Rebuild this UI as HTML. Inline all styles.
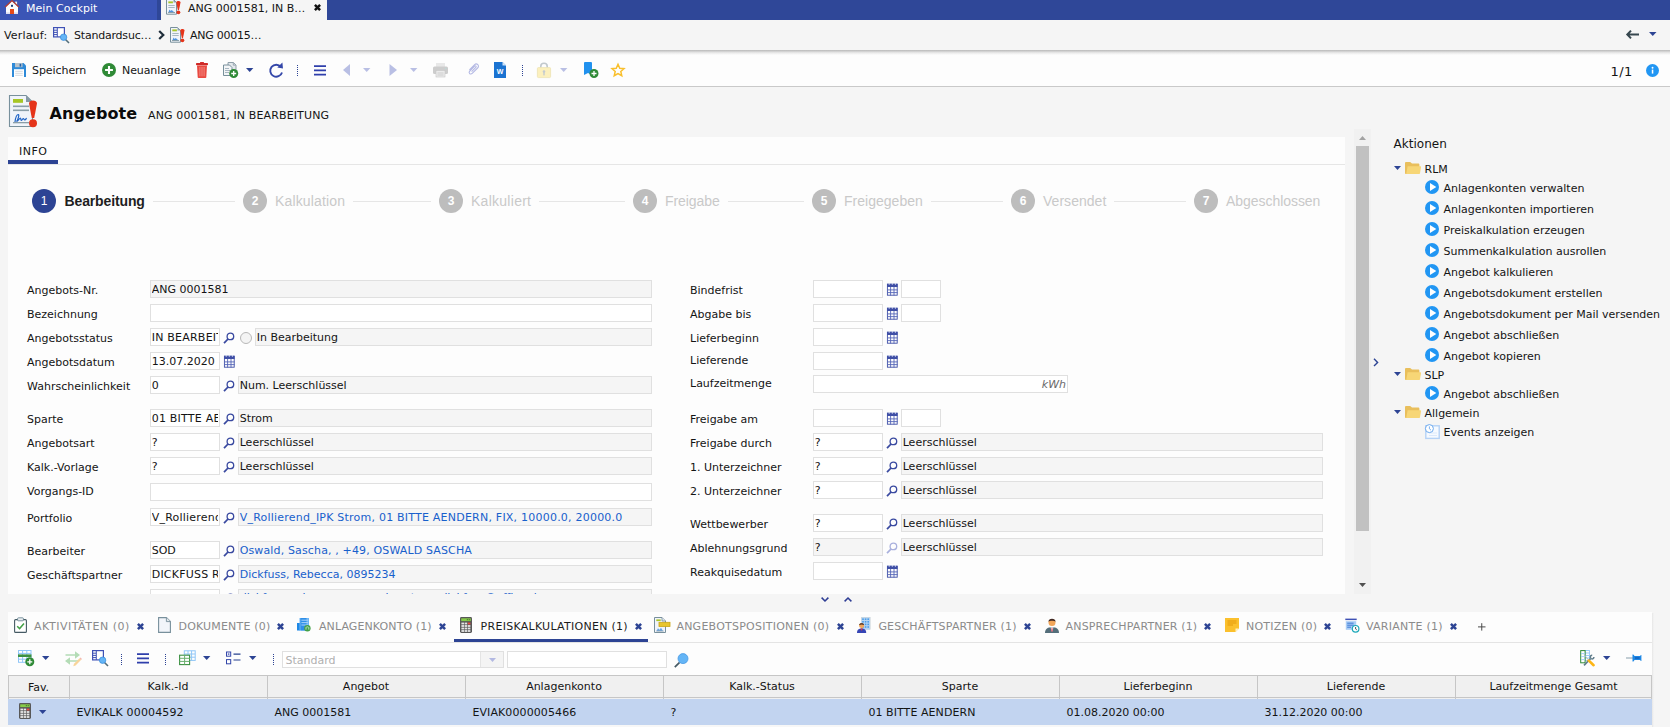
<!DOCTYPE html>
<html lang="de"><head><meta charset="utf-8"><title>Angebote – ANG 0001581</title>
<style>
html,body{margin:0;padding:0}
body{width:1670px;height:727px;overflow:hidden;background:#f5f5f5;position:relative;font-family:"DejaVu Sans","Liberation Sans",sans-serif;font-size:11px}
.a{position:absolute}
.t{white-space:nowrap;display:block}
svg{position:absolute;overflow:visible}
</style></head>
<body>
<div class="a" style="left:0px;top:0px;width:1670px;height:20px;background:#2f4798;"></div>
<div class="a" style="left:0px;top:0px;width:157px;height:20px;background:#3b55b6;"></div>
<div class="a" style="left:161px;top:0px;width:166px;height:20px;background:#f5f5f5;"></div>
<svg style="left:5px;top:0px" width="14" height="14" viewBox="0 0 14 14"><rect x="10.2" y="1.6" width="1.9" height="3.4" fill="#f1f1f6"></rect><path d="M1 6.6L7 0.9L13 6.6V14H1Z" fill="#fbfbfd"></path><rect x="1" y="12.3" width="12" height="1.7" fill="#dedef0"></rect><rect x="5" y="9" width="4" height="5" fill="#e64a19"></rect><rect x="6" y="4.8" width="2" height="2" fill="#1f3f7a"></rect><path d="M0.2 7L7 0.6L13.8 7" fill="none" stroke="#b23b32" stroke-width="1.3"></path></svg>
<span class="a t" style="font-size: 11px; line-height: 14px; color: rgb(255, 255, 255); left: 26px; letter-spacing: 0.03px; top: 2px;">Mein Cockpit</span>
<svg style="left:166px;top:-0.8px" width="15" height="16" viewBox="0 0 15 16"><path d="M0.5 0.5H7.5L10.5 3.5V15.2H0.5Z" fill="#f1f4fa" stroke="#78909c"></path><path d="M7.5 0.5V3.5H10.5Z" fill="#90a4ae"></path><rect x="2.3" y="2.4" width="4.6" height="1.9" fill="#a8c628"></rect><rect x="2.3" y="6" width="6.4" height="0.9" fill="#9fb0b9"></rect><rect x="2.3" y="8" width="6.4" height="0.9" fill="#9fb0b9"></rect><path d="M2.4 13.2L3.6 10.4L4.6 12L5.8 11L7 12.2L8.4 13.2Z" fill="#4f93de"></path><rect x="2" y="13" width="7" height="0.9" fill="#8097a2"></rect><path d="M10.3 3.6C10.3 1.6 14.5 1.6 14.5 3.6L13 11H11.8Z" fill="#e5341a"></path><circle cx="12.4" cy="13.3" r="1.9" fill="#e5341a"></circle></svg>
<span class="a t" style="font-size: 11px; line-height: 14px; color: rgb(20, 20, 20); left: 188px; top: 2px;">ANG 0001581, IN B…</span>
<svg style="left:314px;top:4px" width="7" height="7" viewBox="0 0 7 7"><path d="M0.9 0.9L6.1 6.1M6.1 0.9L0.9 6.1" stroke="#111" stroke-width="2.5" stroke-linecap="butt"></path></svg>
<div class="a" style="left:0px;top:20px;width:1670px;height:30px;background:#f5f5f5;"></div>
<span class="a t" style="font-size: 11px; line-height: 14px; color: rgb(20, 20, 20); left: 4px; letter-spacing: 0.17px; top: 29px;">Verlauf:</span>
<svg style="left:53px;top:27px" width="17" height="17" viewBox="0 0 17 17"><rect x="0.6" y="0.6" width="10.8" height="9.3" fill="#fff" stroke="#3f51b5" stroke-width="1.2"></rect><path d="M1 3.2H4M1 5.4H4M1 7.6H4" stroke="#3f51b5" stroke-width="1"></path><path d="M4.3 0.6V9.9" stroke="#3f51b5" stroke-width="1"></path><path d="M12.5 12.5L16 16" stroke="#546e7a" stroke-width="1.6"></path><circle cx="10.6" cy="10.2" r="3.2" fill="#64b5f6" stroke="#3d8fdc" stroke-width="0.8"></circle></svg>
<span class="a t" style="font-size: 11px; line-height: 14px; color: rgb(20, 20, 20); left: 74px; letter-spacing: -0.21px; top: 29px;">Standardsuc…</span>
<svg style="left:158px;top:30px" width="7" height="10" viewBox="0 0 7 10"><path d="M1.2 1L5.3 5L1.2 9" fill="none" stroke="#1f2d3a" stroke-width="2.2"></path></svg>
<svg style="left:170px;top:27px" width="15" height="16" viewBox="0 0 15 16"><path d="M0.5 0.5H7.5L10.5 3.5V15.2H0.5Z" fill="#f1f4fa" stroke="#78909c"></path><path d="M7.5 0.5V3.5H10.5Z" fill="#90a4ae"></path><rect x="2.3" y="2.4" width="4.6" height="1.9" fill="#a8c628"></rect><rect x="2.3" y="6" width="6.4" height="0.9" fill="#9fb0b9"></rect><rect x="2.3" y="8" width="6.4" height="0.9" fill="#9fb0b9"></rect><path d="M2.4 13.2L3.6 10.4L4.6 12L5.8 11L7 12.2L8.4 13.2Z" fill="#4f93de"></path><rect x="2" y="13" width="7" height="0.9" fill="#8097a2"></rect><path d="M10.3 3.6C10.3 1.6 14.5 1.6 14.5 3.6L13 11H11.8Z" fill="#e5341a"></path><circle cx="12.4" cy="13.3" r="1.9" fill="#e5341a"></circle></svg>
<span class="a t" style="font-size: 11px; line-height: 14px; color: rgb(20, 20, 20); left: 190px; letter-spacing: -0.25px; top: 29px;">ANG 00015…</span>
<svg style="left:1626px;top:30px" width="13" height="9" viewBox="0 0 13 9"><path d="M5 0.6L1.3 4.5L5 8.4M1.6 4.5H13" fill="none" stroke="#37474f" stroke-width="2"></path></svg>
<svg style="left:1648.5px;top:32px" width="7.5" height="4" viewBox="0 0 7.5 4"><path d="M0 0H7.5L3.75 4Z" fill="#2d4494"></path></svg>
<div class="a" style="left:0;top:50px;width:1670px;height:5px;background:linear-gradient(#b9b9b9,#e9e9e9 55%,#fdfdfd)"></div>
<div class="a" style="left:0px;top:55px;width:1670px;height:31px;background:#fdfdfd;"></div>
<div class="a" style="left:0px;top:86px;width:1670px;height:1px;background:#c9c9c9;"></div>
<svg style="left:12px;top:63px" width="14" height="14" viewBox="0 0 14 14"><path d="M0 0H11.5L14 2.5V14H0Z" fill="#2e8ad8"></path><rect x="3" y="0" width="7.5" height="4.2" fill="#b6c2cb"></rect><rect x="7.6" y="0.8" width="1.6" height="2.8" fill="#1f5fa8"></rect><rect x="2" y="6.2" width="10" height="7.8" fill="#fff"></rect><path d="M3.2 8.3H10.8M3.2 10.3H10.8M3.2 12.3H10.8" stroke="#cfd5da" stroke-width="0.9"></path></svg>
<span class="a t" style="font-size: 11px; line-height: 14px; color: rgb(20, 20, 20); left: 32px; letter-spacing: -0.07px; top: 64px;">Speichern</span>
<svg style="left:102px;top:63px" width="14" height="14" viewBox="0 0 14 14"><circle cx="7.0" cy="7.0" r="7.0" fill="#2f8a36"></circle><path d="M7.0 3.08V10.92M3.08 7.0H10.92" stroke="#fff" stroke-width="2.1"></path></svg>
<span class="a t" style="font-size: 11px; line-height: 14px; color: rgb(20, 20, 20); left: 122px; letter-spacing: -0.1px; top: 64px;">Neuanlage</span>
<svg style="left:196px;top:62px" width="12" height="16" viewBox="0 0 12 16"><rect x="4" y="0" width="4" height="1.6" rx="0.6" fill="#d32f2f"></rect><rect x="0" y="1" width="12" height="2.2" rx="0.8" fill="#cf2a27"></rect><path d="M1 3.6H11L10.3 15.2C10.3 15.7 9.9 16 9.5 16H2.5C2.1 16 1.7 15.7 1.7 15.2Z" fill="#e94a41"></path><path d="M3.9 5V14.3M6 5V14.3M8.1 5V14.3" stroke="#f39088" stroke-width="0.9"></path></svg>
<svg style="left:223px;top:62px" width="16" height="16" viewBox="0 0 16 16"><path d="M5 0.5H10.5L13 3V10.5H5Z" fill="#e3e8ec" stroke="#90a0aa"></path><path d="M10.3 0.7V3.2H12.8" fill="#cfd8dc" stroke="#90a0aa" stroke-width="0.8"></path><path d="M0.5 3H6.5L9 5.5V13.5H0.5Z" fill="#f3f5f7" stroke="#78909c"></path><path d="M2 6.5H6M2 8.5H7M2 10.5H6" stroke="#9fb0ba" stroke-width="0.9"></path><circle cx="10.7" cy="11.5" r="4.5" fill="#2f8a36"></circle><path d="M10.7 9V14M8.2 11.5H13.2" stroke="#fff" stroke-width="1.3"></path></svg>
<svg style="left:246px;top:68px" width="7.4" height="4" viewBox="0 0 7.4 4"><path d="M0 0H7.4L3.7 4Z" fill="#2d4494"></path></svg>
<svg style="left:269px;top:62px" width="15" height="16" viewBox="0 0 15 16"><path d="M11.9 4.9A6 6 0 1 0 13 10.4" fill="none" stroke="#3447a9" stroke-width="1.9"></path><path d="M8.3 5.6L14 6.6L13.4 0.4Z" fill="#3447a9"></path></svg>
<svg style="left:297px;top:65px" width="1" height="11" viewBox="0 0 1 11"><path d="M0.5 0V11" stroke="#2d4494" stroke-width="1" stroke-dasharray="1 1"></path></svg>
<svg style="left:314px;top:65px" width="12" height="11" viewBox="0 0 12 11"><path d="M0 1.1H12M0 5.4H12M0 9.6H12" stroke="#2f3fab" stroke-width="1.9"></path></svg>
<svg style="left:343px;top:64px" width="7" height="12" viewBox="0 0 7 12"><path d="M7 0V12L0 6Z" fill="#b9bfe4"></path></svg>
<svg style="left:363px;top:68px" width="7.4" height="4" viewBox="0 0 7.4 4"><path d="M0 0H7.4L3.7 4Z" fill="#b9bfe4"></path></svg>
<svg style="left:389px;top:64px" width="8" height="12" viewBox="0 0 8 12"><path d="M0.5 0V12L8 6Z" fill="#b9bfe4"></path></svg>
<svg style="left:410px;top:68px" width="7.4" height="4" viewBox="0 0 7.4 4"><path d="M0 0H7.4L3.7 4Z" fill="#b9bfe4"></path></svg>
<svg style="left:433px;top:63px" width="15" height="14" viewBox="0 0 15 14"><rect x="3" y="0" width="9" height="4" fill="#e8e8e8"></rect><rect x="0" y="3.5" width="15" height="7.5" rx="1.5" fill="#cdcdcd"></rect><rect x="3" y="7.5" width="9" height="6.5" fill="#ebebeb" stroke="#c6c6c6" stroke-width="0.6"></rect><path d="M4.5 10H10.5M4.5 12H10.5" stroke="#c9c9c9" stroke-width="0.9"></path><circle cx="12.8" cy="5.3" r="0.6" fill="#b2dfdb"></circle></svg>
<svg style="left:467px;top:63px" width="13" height="13" viewBox="0 0 13 13"><path d="M4.6 8.6L8.8 4.4C9.8 3.4 8.6 2.2 7.6 3.2L2.8 8C1 9.8 3.4 12.2 5.2 10.4L10.6 5C13 2.6 9.8 -0.6 7.4 1.8L2.4 6.8" fill="none" stroke="#b4b9e4" stroke-width="1.1"></path></svg>
<svg style="left:494px;top:62px" width="12" height="16" viewBox="0 0 12 16"><path d="M0 0H8.5L12 3.5V16H0Z" fill="#1b73d1"></path><path d="M8.5 0V3.5H12Z" fill="#d4e6f9"></path><text x="6" y="12.2" font-family="Liberation Sans,sans-serif" font-size="7" font-weight="bold" fill="#fff" text-anchor="middle">W</text></svg>
<svg style="left:522px;top:65px" width="1" height="11" viewBox="0 0 1 11"><path d="M0.5 0V11" stroke="#2d4494" stroke-width="1" stroke-dasharray="1 1"></path></svg>
<svg style="left:537px;top:62px" width="14" height="16" viewBox="0 0 14 16"><path d="M3.8 6.5V4.2C3.8 0.3 10.2 0.3 10.2 4.2V6.5" fill="none" stroke="#c2c9cd" stroke-width="1.6"></path><rect x="0.4" y="5.6" width="13.2" height="10" rx="1" fill="#fcf0bd" stroke="#ece2b4" stroke-width="0.8"></rect><circle cx="7" cy="9.5" r="1.3" fill="#c5cbcf"></circle><rect x="6.3" y="9.8" width="1.4" height="3.6" fill="#c5cbcf"></rect></svg>
<svg style="left:560px;top:68px" width="7.4" height="4" viewBox="0 0 7.4 4"><path d="M0 0H7.4L3.7 4Z" fill="#b9bfe4"></path></svg>
<svg style="left:584px;top:62px" width="15" height="16" viewBox="0 0 15 16"><path d="M0 1.2C0 0.5 0.5 0 1.2 0H6.8C7.5 0 8 0.5 8 1.2V13L4 11L0 13Z" fill="#2191ee"></path><circle cx="10" cy="11.5" r="4.5" fill="#2f8a36"></circle><path d="M10 9V14M7.5 11.5H12.5" stroke="#fff" stroke-width="1.3"></path></svg>
<svg style="left:611px;top:63px" width="14" height="14" viewBox="0 0 14 14"><path d="M7 1.3L8.75 5.3L13 5.7L9.8 8.5L10.75 12.7L7 10.5L3.25 12.7L4.2 8.5L1 5.7L5.25 5.3Z" fill="none" stroke="#f9bf2c" stroke-width="1.5" stroke-linejoin="miter"></path></svg>
<span class="a t" style="font-size: 13px; line-height: 16px; color: rgb(20, 20, 20); left: 1610.5px; letter-spacing: 0.46px; top: 64px;">1/1</span>
<svg style="left:1645.5px;top:63.5px" width="13" height="13" viewBox="0 0 13 13"><circle cx="6.5" cy="6.5" r="6.5" fill="#2196f3"></circle><rect x="5.8" y="5.6" width="1.5" height="4" fill="#fff"></rect><circle cx="6.55" cy="3.7" r="0.95" fill="#fff"></circle></svg>
<svg style="left:9px;top:95px" width="30" height="33" viewBox="0 0 30 33"><path d="M0.5 0.5H17L23.5 7V31.5H0.5Z" fill="#f0f4fa" stroke="#78909c" stroke-width="1.1"></path><path d="M17 0.5V7H23.5Z" fill="#8699a3"></path><rect x="4" y="4" width="10" height="3.8" fill="#a6c625"></rect><rect x="4" y="10.5" width="16" height="1.6" fill="#8a9ea8"></rect><rect x="4" y="14.5" width="16" height="1.6" fill="#8a9ea8"></rect><rect x="4" y="27" width="16" height="1.3" fill="#8a9ea8"></rect><path d="M6 27C6.5 23 8 19.5 9.3 19.5C10.6 19.5 9 25 7.5 26.5C9 26 10.5 23 11.5 23C12 23 11.5 25.5 12.3 25.5C13 25.5 13.6 23.5 14.3 23.5C15 23.5 15 25 15.7 25C16.3 25 17 23.5 17.8 23.3" fill="none" stroke="#1e63c6" stroke-width="1.2"></path><path d="M20 8.5C20 4.6 28 4.6 28 8.5L25.2 23H22.8Z" fill="#e5341a"></path><circle cx="24" cy="28.2" r="4" fill="#e5341a"></circle></svg>
<span class="a t" style="font-size: 16px; line-height: 19px; color: rgb(11, 11, 11); font-weight: bold; left: 49.5px; letter-spacing: 0.1px; top: 104px;">Angebote</span>
<span class="a t" style="font-size: 11px; line-height: 14px; color: rgb(20, 20, 20); left: 148px; letter-spacing: 0.13px; top: 109px;">ANG 0001581, IN BEARBEITUNG</span>
<div class="a" style="left:8px;top:137px;width:1337px;height:457px;background:#fdfdfd;"></div>
<span class="a t" style="font-size: 11px; line-height: 14px; color: rgb(20, 20, 20); left: 19px; letter-spacing: 0.46px; top: 145px;">INFO</span>
<div class="a" style="left:8px;top:164px;width:1337px;height:1px;background:#e6e6e6;"></div>
<div class="a" style="left:8px;top:160px;width:50px;height:4px;background:#2d4494;"></div>
<div class="a" style="left:32px;top:189px;width:24px;height:24px;border-radius:12px;background:#2d4494"></div>
<span class="a t" style="font-size: 12px; line-height: 15px; color: rgb(255, 255, 255); font-family: &quot;Liberation Sans&quot;, &quot;DejaVu Sans&quot;, sans-serif; left: 40.7px; top: 194.3px;">1</span>
<span class="a t" style="font-size: 14px; line-height: 17px; color: rgb(31, 31, 31); font-weight: bold; font-family: &quot;Liberation Sans&quot;, &quot;DejaVu Sans&quot;, sans-serif; left: 64.5px; letter-spacing: -0.13px; top: 193px;">Bearbeitung</span>
<div class="a" style="left:153px;top:201px;width:82px;height:1px;background:#e6e6e6;"></div>
<div class="a" style="left:243px;top:189px;width:24px;height:24px;border-radius:12px;background:#bdbdbd"></div>
<span class="a t" style="font-size: 12px; line-height: 15px; color: rgb(255, 255, 255); font-weight: bold; font-family: &quot;Liberation Sans&quot;, &quot;DejaVu Sans&quot;, sans-serif; left: 251.7px; top: 194.3px;">2</span>
<span class="a t" style="font-size: 14px; line-height: 17px; color: rgb(201, 201, 201); font-family: &quot;Liberation Sans&quot;, &quot;DejaVu Sans&quot;, sans-serif; left: 275px; letter-spacing: 0.16px; top: 193px;">Kalkulation</span>
<div class="a" style="left:353px;top:201px;width:78px;height:1px;background:#e6e6e6;"></div>
<div class="a" style="left:439px;top:189px;width:24px;height:24px;border-radius:12px;background:#bdbdbd"></div>
<span class="a t" style="font-size: 12px; line-height: 15px; color: rgb(255, 255, 255); font-weight: bold; font-family: &quot;Liberation Sans&quot;, &quot;DejaVu Sans&quot;, sans-serif; left: 447.7px; top: 194.3px;">3</span>
<span class="a t" style="font-size: 14px; line-height: 17px; color: rgb(201, 201, 201); font-family: &quot;Liberation Sans&quot;, &quot;DejaVu Sans&quot;, sans-serif; left: 471px; letter-spacing: 0.27px; top: 193px;">Kalkuliert</span>
<div class="a" style="left:539px;top:201px;width:86px;height:1px;background:#e6e6e6;"></div>
<div class="a" style="left:633px;top:189px;width:24px;height:24px;border-radius:12px;background:#bdbdbd"></div>
<span class="a t" style="font-size: 12px; line-height: 15px; color: rgb(255, 255, 255); font-weight: bold; font-family: &quot;Liberation Sans&quot;, &quot;DejaVu Sans&quot;, sans-serif; left: 641.7px; top: 194.3px;">4</span>
<span class="a t" style="font-size: 14px; line-height: 17px; color: rgb(201, 201, 201); font-family: &quot;Liberation Sans&quot;, &quot;DejaVu Sans&quot;, sans-serif; left: 665px; letter-spacing: -0.06px; top: 193px;">Freigabe</span>
<div class="a" style="left:727.5px;top:201px;width:76.5px;height:1px;background:#e6e6e6;"></div>
<div class="a" style="left:812px;top:189px;width:24px;height:24px;border-radius:12px;background:#bdbdbd"></div>
<span class="a t" style="font-size: 12px; line-height: 15px; color: rgb(255, 255, 255); font-weight: bold; font-family: &quot;Liberation Sans&quot;, &quot;DejaVu Sans&quot;, sans-serif; left: 820.7px; top: 194.3px;">5</span>
<span class="a t" style="font-size: 14px; line-height: 17px; color: rgb(201, 201, 201); font-family: &quot;Liberation Sans&quot;, &quot;DejaVu Sans&quot;, sans-serif; left: 844px; letter-spacing: 0.02px; top: 193px;">Freigegeben</span>
<div class="a" style="left:930.5px;top:201px;width:72.5px;height:1px;background:#e6e6e6;"></div>
<div class="a" style="left:1011px;top:189px;width:24px;height:24px;border-radius:12px;background:#bdbdbd"></div>
<span class="a t" style="font-size: 12px; line-height: 15px; color: rgb(255, 255, 255); font-weight: bold; font-family: &quot;Liberation Sans&quot;, &quot;DejaVu Sans&quot;, sans-serif; left: 1019.7px; top: 194.3px;">6</span>
<span class="a t" style="font-size: 14px; line-height: 17px; color: rgb(201, 201, 201); font-family: &quot;Liberation Sans&quot;, &quot;DejaVu Sans&quot;, sans-serif; left: 1043px; letter-spacing: 0.03px; top: 193px;">Versendet</span>
<div class="a" style="left:1114px;top:201px;width:72px;height:1px;background:#e6e6e6;"></div>
<div class="a" style="left:1194px;top:189px;width:24px;height:24px;border-radius:12px;background:#bdbdbd"></div>
<span class="a t" style="font-size: 12px; line-height: 15px; color: rgb(255, 255, 255); font-weight: bold; font-family: &quot;Liberation Sans&quot;, &quot;DejaVu Sans&quot;, sans-serif; left: 1202.7px; top: 194.3px;">7</span>
<span class="a t" style="font-size: 14px; line-height: 17px; color: rgb(201, 201, 201); font-family: &quot;Liberation Sans&quot;, &quot;DejaVu Sans&quot;, sans-serif; left: 1226px; letter-spacing: -0.05px; top: 193px;">Abgeschlossen</span>
<span class="a t" style="font-size: 11px; line-height: 14px; color: rgb(20, 20, 20); left: 27px; top: 284px;">Angebots-Nr.</span>
<div class="a" style="left:150px;top:280px;width:502px;height:18px;background:#f5f5f5;border:1px solid #e0e0e0;box-sizing:border-box;"></div>
<span class="a t" style="font-size: 11px; line-height: 14px; color: rgb(20, 20, 20); width: 498px; overflow: hidden; left: 151.7px; top: 283px;">ANG 0001581</span>
<span class="a t" style="font-size: 11px; line-height: 14px; color: rgb(20, 20, 20); left: 27px; top: 308px;">Bezeichnung</span>
<div class="a" style="left:150px;top:304px;width:502px;height:18px;background:#fff;border:1px solid #e0e0e0;box-sizing:border-box;"></div>
<span class="a t" style="font-size: 11px; line-height: 14px; color: rgb(20, 20, 20); left: 27px; top: 332px;">Angebotsstatus</span>
<div class="a" style="left:150px;top:328px;width:70px;height:18px;background:#fff;border:1px solid #e0e0e0;box-sizing:border-box;"></div>
<span class="a t" style="font-size: 11px; line-height: 14px; color: rgb(20, 20, 20); letter-spacing: 0.22px; width: 66px; overflow: hidden; left: 151.7px; top: 331px;">IN BEARBEITUNG</span>
<svg style="left:223px;top:332px" width="12" height="12" viewBox="0 0 12 12"><circle cx="7.4" cy="4.4" r="3.3" fill="none" stroke="#3949a0" stroke-width="1.3"></circle><path d="M5 7L1 11.2" stroke="#3949a0" stroke-width="1.8"></path></svg>
<div class="a" style="left:240px;top:332px;width:12px;height:12px;border-radius:6px;border:1px solid #b8b8b8;box-sizing:border-box;background:#f4f4f4"></div>
<div class="a" style="left:255px;top:328px;width:397px;height:18px;background:#f5f5f5;border:1px solid #e0e0e0;box-sizing:border-box;"></div>
<span class="a t" style="font-size: 11px; line-height: 14px; color: rgb(20, 20, 20); width: 393px; overflow: hidden; left: 256.7px; top: 331px;">In Bearbeitung</span>
<span class="a t" style="font-size: 11px; line-height: 14px; color: rgb(20, 20, 20); left: 27px; top: 356px;">Angebotsdatum</span>
<div class="a" style="left:150px;top:352px;width:70px;height:18px;background:#fff;border:1px solid #e0e0e0;box-sizing:border-box;"></div>
<span class="a t" style="font-size: 11px; line-height: 14px; color: rgb(20, 20, 20); width: 66px; overflow: hidden; left: 151.7px; top: 355px;">13.07.2020</span>
<svg style="left:224px;top:354.6px" width="11" height="13" viewBox="0 0 11 13"><rect x="0" y="0.8" width="10.6" height="3.2" fill="#3f4fa6"></rect><rect x="0.4" y="1.2" width="9.8" height="11" fill="none" stroke="#3f4fa6" stroke-width="0.9"></rect><path d="M3.6 4V12.5M7 4V12.5M0 6.9H10.6M0 9.6H10.6" stroke="#5565b8" stroke-width="0.9"></path><path d="M2.2 0V1.8M5.3 0V1.8M8.4 0V1.8" stroke="#dfe3f5" stroke-width="0.9"></path></svg>
<span class="a t" style="font-size: 11px; line-height: 14px; color: rgb(20, 20, 20); left: 27px; top: 380px;">Wahrscheinlichkeit</span>
<div class="a" style="left:150px;top:376px;width:70px;height:18px;background:#fff;border:1px solid #e0e0e0;box-sizing:border-box;"></div>
<span class="a t" style="font-size: 11px; line-height: 14px; color: rgb(20, 20, 20); width: 66px; overflow: hidden; left: 151.7px; top: 379px;">0</span>
<svg style="left:223px;top:380px" width="12" height="12" viewBox="0 0 12 12"><circle cx="7.4" cy="4.4" r="3.3" fill="none" stroke="#3949a0" stroke-width="1.3"></circle><path d="M5 7L1 11.2" stroke="#3949a0" stroke-width="1.8"></path></svg>
<div class="a" style="left:238px;top:376px;width:414px;height:18px;background:#f5f5f5;border:1px solid #e0e0e0;box-sizing:border-box;"></div>
<span class="a t" style="font-size: 11px; line-height: 14px; color: rgb(20, 20, 20); width: 410px; overflow: hidden; left: 239.7px; top: 379px;">Num. Leerschlüssel</span>
<span class="a t" style="font-size: 11px; line-height: 14px; color: rgb(20, 20, 20); left: 27px; top: 413px;">Sparte</span>
<div class="a" style="left:150px;top:409px;width:70px;height:18px;background:#fff;border:1px solid #e0e0e0;box-sizing:border-box;"></div>
<span class="a t" style="font-size: 11px; line-height: 14px; color: rgb(20, 20, 20); letter-spacing: 0.22px; width: 66px; overflow: hidden; left: 151.7px; top: 412px;">01 BITTE AENDERN</span>
<svg style="left:223px;top:413px" width="12" height="12" viewBox="0 0 12 12"><circle cx="7.4" cy="4.4" r="3.3" fill="none" stroke="#3949a0" stroke-width="1.3"></circle><path d="M5 7L1 11.2" stroke="#3949a0" stroke-width="1.8"></path></svg>
<div class="a" style="left:238px;top:409px;width:414px;height:18px;background:#f5f5f5;border:1px solid #e0e0e0;box-sizing:border-box;"></div>
<span class="a t" style="font-size: 11px; line-height: 14px; color: rgb(20, 20, 20); width: 410px; overflow: hidden; left: 239.7px; top: 412px;">Strom</span>
<span class="a t" style="font-size: 11px; line-height: 14px; color: rgb(20, 20, 20); left: 27px; top: 437px;">Angebotsart</span>
<div class="a" style="left:150px;top:433px;width:70px;height:18px;background:#fff;border:1px solid #e0e0e0;box-sizing:border-box;"></div>
<span class="a t" style="font-size: 11px; line-height: 14px; color: rgb(20, 20, 20); width: 66px; overflow: hidden; left: 151.7px; top: 436px;">?</span>
<svg style="left:223px;top:437px" width="12" height="12" viewBox="0 0 12 12"><circle cx="7.4" cy="4.4" r="3.3" fill="none" stroke="#3949a0" stroke-width="1.3"></circle><path d="M5 7L1 11.2" stroke="#3949a0" stroke-width="1.8"></path></svg>
<div class="a" style="left:238px;top:433px;width:414px;height:18px;background:#f5f5f5;border:1px solid #e0e0e0;box-sizing:border-box;"></div>
<span class="a t" style="font-size: 11px; line-height: 14px; color: rgb(20, 20, 20); width: 410px; overflow: hidden; left: 239.7px; top: 436px;">Leerschlüssel</span>
<span class="a t" style="font-size: 11px; line-height: 14px; color: rgb(20, 20, 20); left: 27px; top: 461px;">Kalk.-Vorlage</span>
<div class="a" style="left:150px;top:457px;width:70px;height:18px;background:#fff;border:1px solid #e0e0e0;box-sizing:border-box;"></div>
<span class="a t" style="font-size: 11px; line-height: 14px; color: rgb(20, 20, 20); width: 66px; overflow: hidden; left: 151.7px; top: 460px;">?</span>
<svg style="left:223px;top:461px" width="12" height="12" viewBox="0 0 12 12"><circle cx="7.4" cy="4.4" r="3.3" fill="none" stroke="#3949a0" stroke-width="1.3"></circle><path d="M5 7L1 11.2" stroke="#3949a0" stroke-width="1.8"></path></svg>
<div class="a" style="left:238px;top:457px;width:414px;height:18px;background:#f5f5f5;border:1px solid #e0e0e0;box-sizing:border-box;"></div>
<span class="a t" style="font-size: 11px; line-height: 14px; color: rgb(20, 20, 20); width: 410px; overflow: hidden; left: 239.7px; top: 460px;">Leerschlüssel</span>
<span class="a t" style="font-size: 11px; line-height: 14px; color: rgb(20, 20, 20); left: 27px; top: 485px;">Vorgangs-ID</span>
<div class="a" style="left:150px;top:483px;width:502px;height:18px;background:#fff;border:1px solid #e0e0e0;box-sizing:border-box;"></div>
<span class="a t" style="font-size: 11px; line-height: 14px; color: rgb(20, 20, 20); left: 27px; top: 512px;">Portfolio</span>
<div class="a" style="left:150px;top:508px;width:70px;height:18px;background:#fff;border:1px solid #e0e0e0;box-sizing:border-box;"></div>
<span class="a t" style="font-size: 11px; line-height: 14px; color: rgb(20, 20, 20); letter-spacing: 0.22px; width: 66px; overflow: hidden; left: 151.7px; top: 511px;">V_Rollierend_IPK Strom</span>
<svg style="left:223px;top:512px" width="12" height="12" viewBox="0 0 12 12"><circle cx="7.4" cy="4.4" r="3.3" fill="none" stroke="#3949a0" stroke-width="1.3"></circle><path d="M5 7L1 11.2" stroke="#3949a0" stroke-width="1.8"></path></svg>
<div class="a" style="left:238px;top:508px;width:414px;height:18px;background:#f5f5f5;border:1px solid #e0e0e0;box-sizing:border-box;"></div>
<span class="a t" style="font-size: 11px; line-height: 14px; color: rgb(24, 96, 204); left: 239.7px; letter-spacing: 0.22px; top: 511px;">V_Rollierend_IPK Strom, 01 BITTE AENDERN, FIX, 10000.0, 20000.0</span>
<span class="a t" style="font-size: 11px; line-height: 14px; color: rgb(20, 20, 20); left: 27px; top: 545px;">Bearbeiter</span>
<div class="a" style="left:150px;top:541px;width:70px;height:18px;background:#fff;border:1px solid #e0e0e0;box-sizing:border-box;"></div>
<span class="a t" style="font-size: 11px; line-height: 14px; color: rgb(20, 20, 20); width: 66px; overflow: hidden; left: 151.7px; top: 544px;">SOD</span>
<svg style="left:223px;top:545px" width="12" height="12" viewBox="0 0 12 12"><circle cx="7.4" cy="4.4" r="3.3" fill="none" stroke="#3949a0" stroke-width="1.3"></circle><path d="M5 7L1 11.2" stroke="#3949a0" stroke-width="1.8"></path></svg>
<div class="a" style="left:238px;top:541px;width:414px;height:18px;background:#f5f5f5;border:1px solid #e0e0e0;box-sizing:border-box;"></div>
<span class="a t" style="font-size: 11px; line-height: 14px; color: rgb(24, 96, 204); left: 239.7px; letter-spacing: 0.14px; top: 544px;">Oswald, Sascha, , +49, OSWALD SASCHA</span>
<span class="a t" style="font-size: 11px; line-height: 14px; color: rgb(20, 20, 20); left: 27px; top: 569px;">Geschäftspartner</span>
<div class="a" style="left:150px;top:565px;width:70px;height:18px;background:#fff;border:1px solid #e0e0e0;box-sizing:border-box;"></div>
<span class="a t" style="font-size: 11px; line-height: 14px; color: rgb(20, 20, 20); letter-spacing: 0.22px; width: 66px; overflow: hidden; left: 151.7px; top: 568px;">DICKFUSS REBECCA</span>
<svg style="left:223px;top:569px" width="12" height="12" viewBox="0 0 12 12"><circle cx="7.4" cy="4.4" r="3.3" fill="none" stroke="#3949a0" stroke-width="1.3"></circle><path d="M5 7L1 11.2" stroke="#3949a0" stroke-width="1.8"></path></svg>
<div class="a" style="left:238px;top:565px;width:414px;height:18px;background:#f5f5f5;border:1px solid #e0e0e0;box-sizing:border-box;"></div>
<span class="a t" style="font-size: 11px; line-height: 14px; color: rgb(24, 96, 204); width: 410px; overflow: hidden; left: 239.7px; top: 568px;">Dickfuss, Rebecca, 0895234</span>
<span class="a t" style="font-size: 11px; line-height: 14px; color: rgb(20, 20, 20); left: 27px; top: 593px;">Ansprechpartner</span>
<div class="a" style="left:150px;top:589px;width:70px;height:18px;background:#fff;border:1px solid #e0e0e0;box-sizing:border-box;"></div>
<svg style="left:223px;top:593px" width="12" height="12" viewBox="0 0 12 12"><circle cx="7.4" cy="4.4" r="3.3" fill="none" stroke="#3949a0" stroke-width="1.3"></circle><path d="M5 7L1 11.2" stroke="#3949a0" stroke-width="1.8"></path></svg>
<div class="a" style="left:238px;top:589px;width:414px;height:18px;background:#f5f5f5;border:1px solid #e0e0e0;box-sizing:border-box;"></div>
<span class="a t" style="font-size: 11px; line-height: 14px; color: rgb(24, 96, 204); left: 239.7px; top: 591.1px;">dickfuss, rebecca, ansprechpartner, dickfuss@office.de</span>
<span class="a t" style="font-size: 11px; line-height: 14px; color: rgb(20, 20, 20); left: 690px; top: 284px;">Bindefrist</span>
<div class="a" style="left:813px;top:280px;width:70px;height:18px;background:#fff;border:1px solid #e0e0e0;box-sizing:border-box;"></div>
<svg style="left:887px;top:282.6px" width="11" height="13" viewBox="0 0 11 13"><rect x="0" y="0.8" width="10.6" height="3.2" fill="#3f4fa6"></rect><rect x="0.4" y="1.2" width="9.8" height="11" fill="none" stroke="#3f4fa6" stroke-width="0.9"></rect><path d="M3.6 4V12.5M7 4V12.5M0 6.9H10.6M0 9.6H10.6" stroke="#5565b8" stroke-width="0.9"></path><path d="M2.2 0V1.8M5.3 0V1.8M8.4 0V1.8" stroke="#dfe3f5" stroke-width="0.9"></path></svg>
<div class="a" style="left:901px;top:280px;width:40px;height:18px;background:#fff;border:1px solid #e0e0e0;box-sizing:border-box;"></div>
<span class="a t" style="font-size: 11px; line-height: 14px; color: rgb(20, 20, 20); left: 690px; top: 308px;">Abgabe bis</span>
<div class="a" style="left:813px;top:304px;width:70px;height:18px;background:#fff;border:1px solid #e0e0e0;box-sizing:border-box;"></div>
<svg style="left:887px;top:306.6px" width="11" height="13" viewBox="0 0 11 13"><rect x="0" y="0.8" width="10.6" height="3.2" fill="#3f4fa6"></rect><rect x="0.4" y="1.2" width="9.8" height="11" fill="none" stroke="#3f4fa6" stroke-width="0.9"></rect><path d="M3.6 4V12.5M7 4V12.5M0 6.9H10.6M0 9.6H10.6" stroke="#5565b8" stroke-width="0.9"></path><path d="M2.2 0V1.8M5.3 0V1.8M8.4 0V1.8" stroke="#dfe3f5" stroke-width="0.9"></path></svg>
<div class="a" style="left:901px;top:304px;width:40px;height:18px;background:#fff;border:1px solid #e0e0e0;box-sizing:border-box;"></div>
<span class="a t" style="font-size: 11px; line-height: 14px; color: rgb(20, 20, 20); left: 690px; top: 332px;">Lieferbeginn</span>
<div class="a" style="left:813px;top:328px;width:70px;height:18px;background:#fff;border:1px solid #e0e0e0;box-sizing:border-box;"></div>
<svg style="left:887px;top:330.6px" width="11" height="13" viewBox="0 0 11 13"><rect x="0" y="0.8" width="10.6" height="3.2" fill="#3f4fa6"></rect><rect x="0.4" y="1.2" width="9.8" height="11" fill="none" stroke="#3f4fa6" stroke-width="0.9"></rect><path d="M3.6 4V12.5M7 4V12.5M0 6.9H10.6M0 9.6H10.6" stroke="#5565b8" stroke-width="0.9"></path><path d="M2.2 0V1.8M5.3 0V1.8M8.4 0V1.8" stroke="#dfe3f5" stroke-width="0.9"></path></svg>
<span class="a t" style="font-size: 11px; line-height: 14px; color: rgb(20, 20, 20); left: 690px; top: 354px;">Lieferende</span>
<div class="a" style="left:813px;top:352px;width:70px;height:18px;background:#fff;border:1px solid #e0e0e0;box-sizing:border-box;"></div>
<svg style="left:887px;top:354.6px" width="11" height="13" viewBox="0 0 11 13"><rect x="0" y="0.8" width="10.6" height="3.2" fill="#3f4fa6"></rect><rect x="0.4" y="1.2" width="9.8" height="11" fill="none" stroke="#3f4fa6" stroke-width="0.9"></rect><path d="M3.6 4V12.5M7 4V12.5M0 6.9H10.6M0 9.6H10.6" stroke="#5565b8" stroke-width="0.9"></path><path d="M2.2 0V1.8M5.3 0V1.8M8.4 0V1.8" stroke="#dfe3f5" stroke-width="0.9"></path></svg>
<span class="a t" style="font-size: 11px; line-height: 14px; color: rgb(20, 20, 20); left: 690px; top: 377px;">Laufzeitmenge</span>
<div class="a" style="left:813px;top:375px;width:255px;height:18px;background:#fff;border:1px solid #e0e0e0;box-sizing:border-box;"></div>
<span class="a t" style="font-size: 11px; line-height: 14px; color: rgb(105, 105, 105); font-style: italic; right: 604px; top: 378px;">kWh</span>
<span class="a t" style="font-size: 11px; line-height: 14px; color: rgb(20, 20, 20); left: 690px; top: 413px;">Freigabe am</span>
<div class="a" style="left:813px;top:409px;width:70px;height:18px;background:#fff;border:1px solid #e0e0e0;box-sizing:border-box;"></div>
<svg style="left:887px;top:411.6px" width="11" height="13" viewBox="0 0 11 13"><rect x="0" y="0.8" width="10.6" height="3.2" fill="#3f4fa6"></rect><rect x="0.4" y="1.2" width="9.8" height="11" fill="none" stroke="#3f4fa6" stroke-width="0.9"></rect><path d="M3.6 4V12.5M7 4V12.5M0 6.9H10.6M0 9.6H10.6" stroke="#5565b8" stroke-width="0.9"></path><path d="M2.2 0V1.8M5.3 0V1.8M8.4 0V1.8" stroke="#dfe3f5" stroke-width="0.9"></path></svg>
<div class="a" style="left:901px;top:409px;width:40px;height:18px;background:#fff;border:1px solid #e0e0e0;box-sizing:border-box;"></div>
<span class="a t" style="font-size: 11px; line-height: 14px; color: rgb(20, 20, 20); left: 690px; top: 437px;">Freigabe durch</span>
<div class="a" style="left:813px;top:433px;width:70px;height:18px;background:#fff;border:1px solid #e0e0e0;box-sizing:border-box;"></div>
<span class="a t" style="font-size: 11px; line-height: 14px; color: rgb(20, 20, 20); width: 66px; overflow: hidden; left: 814.7px; top: 436px;">?</span>
<svg style="left:886px;top:437px" width="12" height="12" viewBox="0 0 12 12"><circle cx="7.4" cy="4.4" r="3.3" fill="none" stroke="#3949a0" stroke-width="1.3"></circle><path d="M5 7L1 11.2" stroke="#3949a0" stroke-width="1.8"></path></svg>
<div class="a" style="left:901px;top:433px;width:422px;height:18px;background:#f5f5f5;border:1px solid #e0e0e0;box-sizing:border-box;"></div>
<span class="a t" style="font-size: 11px; line-height: 14px; color: rgb(20, 20, 20); width: 418px; overflow: hidden; left: 902.7px; top: 436px;">Leerschlüssel</span>
<span class="a t" style="font-size: 11px; line-height: 14px; color: rgb(20, 20, 20); left: 690px; top: 461px;">1. Unterzeichner</span>
<div class="a" style="left:813px;top:457px;width:70px;height:18px;background:#fff;border:1px solid #e0e0e0;box-sizing:border-box;"></div>
<span class="a t" style="font-size: 11px; line-height: 14px; color: rgb(20, 20, 20); width: 66px; overflow: hidden; left: 814.7px; top: 460px;">?</span>
<svg style="left:886px;top:461px" width="12" height="12" viewBox="0 0 12 12"><circle cx="7.4" cy="4.4" r="3.3" fill="none" stroke="#3949a0" stroke-width="1.3"></circle><path d="M5 7L1 11.2" stroke="#3949a0" stroke-width="1.8"></path></svg>
<div class="a" style="left:901px;top:457px;width:422px;height:18px;background:#f5f5f5;border:1px solid #e0e0e0;box-sizing:border-box;"></div>
<span class="a t" style="font-size: 11px; line-height: 14px; color: rgb(20, 20, 20); width: 418px; overflow: hidden; left: 902.7px; top: 460px;">Leerschlüssel</span>
<span class="a t" style="font-size: 11px; line-height: 14px; color: rgb(20, 20, 20); left: 690px; top: 485px;">2. Unterzeichner</span>
<div class="a" style="left:813px;top:481px;width:70px;height:18px;background:#fff;border:1px solid #e0e0e0;box-sizing:border-box;"></div>
<span class="a t" style="font-size: 11px; line-height: 14px; color: rgb(20, 20, 20); width: 66px; overflow: hidden; left: 814.7px; top: 484px;">?</span>
<svg style="left:886px;top:485px" width="12" height="12" viewBox="0 0 12 12"><circle cx="7.4" cy="4.4" r="3.3" fill="none" stroke="#3949a0" stroke-width="1.3"></circle><path d="M5 7L1 11.2" stroke="#3949a0" stroke-width="1.8"></path></svg>
<div class="a" style="left:901px;top:481px;width:422px;height:18px;background:#f5f5f5;border:1px solid #e0e0e0;box-sizing:border-box;"></div>
<span class="a t" style="font-size: 11px; line-height: 14px; color: rgb(20, 20, 20); width: 418px; overflow: hidden; left: 902.7px; top: 484px;">Leerschlüssel</span>
<span class="a t" style="font-size: 11px; line-height: 14px; color: rgb(20, 20, 20); left: 690px; top: 518px;">Wettbewerber</span>
<div class="a" style="left:813px;top:514px;width:70px;height:18px;background:#fff;border:1px solid #e0e0e0;box-sizing:border-box;"></div>
<span class="a t" style="font-size: 11px; line-height: 14px; color: rgb(20, 20, 20); width: 66px; overflow: hidden; left: 814.7px; top: 517px;">?</span>
<svg style="left:886px;top:518px" width="12" height="12" viewBox="0 0 12 12"><circle cx="7.4" cy="4.4" r="3.3" fill="none" stroke="#3949a0" stroke-width="1.3"></circle><path d="M5 7L1 11.2" stroke="#3949a0" stroke-width="1.8"></path></svg>
<div class="a" style="left:901px;top:514px;width:422px;height:18px;background:#f5f5f5;border:1px solid #e0e0e0;box-sizing:border-box;"></div>
<span class="a t" style="font-size: 11px; line-height: 14px; color: rgb(20, 20, 20); width: 418px; overflow: hidden; left: 902.7px; top: 517px;">Leerschlüssel</span>
<span class="a t" style="font-size: 11px; line-height: 14px; color: rgb(20, 20, 20); left: 690px; top: 542px;">Ablehnungsgrund</span>
<div class="a" style="left:813px;top:538px;width:70px;height:18px;background:#f5f5f5;border:1px solid #e0e0e0;box-sizing:border-box;"></div>
<span class="a t" style="font-size: 11px; line-height: 14px; color: rgb(20, 20, 20); width: 66px; overflow: hidden; left: 814.7px; top: 541px;">?</span>
<svg style="left:886px;top:542px" width="12" height="12" viewBox="0 0 12 12"><circle cx="7.4" cy="4.4" r="3.3" fill="none" stroke="#a9b0dd" stroke-width="1.3"></circle><path d="M5 7L1 11.2" stroke="#a9b0dd" stroke-width="1.8"></path></svg>
<div class="a" style="left:901px;top:538px;width:422px;height:18px;background:#f5f5f5;border:1px solid #e0e0e0;box-sizing:border-box;"></div>
<span class="a t" style="font-size: 11px; line-height: 14px; color: rgb(20, 20, 20); width: 418px; overflow: hidden; left: 902.7px; top: 541px;">Leerschlüssel</span>
<span class="a t" style="font-size: 11px; line-height: 14px; color: rgb(20, 20, 20); left: 690px; top: 566px;">Reakquisedatum</span>
<div class="a" style="left:813px;top:562px;width:70px;height:18px;background:#fff;border:1px solid #e0e0e0;box-sizing:border-box;"></div>
<svg style="left:887px;top:564.6px" width="11" height="13" viewBox="0 0 11 13"><rect x="0" y="0.8" width="10.6" height="3.2" fill="#3f4fa6"></rect><rect x="0.4" y="1.2" width="9.8" height="11" fill="none" stroke="#3f4fa6" stroke-width="0.9"></rect><path d="M3.6 4V12.5M7 4V12.5M0 6.9H10.6M0 9.6H10.6" stroke="#5565b8" stroke-width="0.9"></path><path d="M2.2 0V1.8M5.3 0V1.8M8.4 0V1.8" stroke="#dfe3f5" stroke-width="0.9"></path></svg>
<div class="a" style="left:0px;top:594px;width:1354px;height:18px;background:#f5f5f5;"></div>
<div class="a" style="left:1354px;top:129px;width:17px;height:465px;background:#f1f1f1;"></div>
<div class="a" style="left:1356px;top:146px;width:13px;height:385px;background:#c1c1c1;"></div>
<svg style="left:1359px;top:136px" width="7" height="4" viewBox="0 0 7 4"><path d="M0 4H7L3.5 0Z" fill="#a3a3a3"></path></svg>
<svg style="left:1359px;top:583px" width="7" height="4" viewBox="0 0 7 4"><path d="M0 0H7L3.5 4Z" fill="#505050"></path></svg>
<svg style="left:1373px;top:358px" width="6" height="9" viewBox="0 0 6 9"><path d="M1 0.8L4.6 4.4L1 8" fill="none" stroke="#2d4494" stroke-width="1.4"></path></svg>
<span class="a t" style="font-size: 12px; line-height: 15px; color: rgb(20, 20, 20); left: 1393.5px; letter-spacing: 0.02px; top: 137px;">Aktionen</span>
<svg style="left:1394px;top:166.0px" width="7" height="4" viewBox="0 0 7 4"><path d="M0 0H7L3.5 4Z" fill="#2d4494"></path></svg>
<svg style="left:1405px;top:162.0px" width="16" height="12" viewBox="0 0 16 12"><path d="M0 1.2C0 0.5 0.5 0 1.2 0H5.2L7 1.6H13.2C13.9 1.6 14.4 2.1 14.4 2.8V11C14.4 11.6 13.9 12 13.2 12H1.2C0.5 12 0 11.6 0 11Z" fill="#e9bf5c"></path><path d="M2.6 4.2H15.2C15.8 4.2 16.1 4.6 16 5.2L15 11.2C14.9 11.7 14.5 12 14 12H1.2Z" fill="#f7d676"></path></svg>
<span class="a t" style="font-size: 11px; line-height: 14px; color: rgb(20, 20, 20); left: 1424.5px; top: 163px;">RLM</span>
<svg style="left:1425px;top:180.0px" width="14" height="14" viewBox="0 0 14 14"><circle cx="7" cy="7" r="7" fill="#2196f3"></circle><path d="M5 3V11L11.3 7Z" fill="#fff"></path></svg>
<span class="a t" style="font-size: 11px; line-height: 14px; color: rgb(20, 20, 20); left: 1443.5px; top: 182px;">Anlagenkonten verwalten</span>
<svg style="left:1425px;top:201.0px" width="14" height="14" viewBox="0 0 14 14"><circle cx="7" cy="7" r="7" fill="#2196f3"></circle><path d="M5 3V11L11.3 7Z" fill="#fff"></path></svg>
<span class="a t" style="font-size: 11px; line-height: 14px; color: rgb(20, 20, 20); left: 1443.5px; top: 203px;">Anlagenkonten importieren</span>
<svg style="left:1425px;top:222.0px" width="14" height="14" viewBox="0 0 14 14"><circle cx="7" cy="7" r="7" fill="#2196f3"></circle><path d="M5 3V11L11.3 7Z" fill="#fff"></path></svg>
<span class="a t" style="font-size: 11px; line-height: 14px; color: rgb(20, 20, 20); left: 1443.5px; top: 224px;">Preiskalkulation erzeugen</span>
<svg style="left:1425px;top:243.0px" width="14" height="14" viewBox="0 0 14 14"><circle cx="7" cy="7" r="7" fill="#2196f3"></circle><path d="M5 3V11L11.3 7Z" fill="#fff"></path></svg>
<span class="a t" style="font-size: 11px; line-height: 14px; color: rgb(20, 20, 20); left: 1443.5px; top: 245px;">Summenkalkulation ausrollen</span>
<svg style="left:1425px;top:264.0px" width="14" height="14" viewBox="0 0 14 14"><circle cx="7" cy="7" r="7" fill="#2196f3"></circle><path d="M5 3V11L11.3 7Z" fill="#fff"></path></svg>
<span class="a t" style="font-size: 11px; line-height: 14px; color: rgb(20, 20, 20); left: 1443.5px; top: 266px;">Angebot kalkulieren</span>
<svg style="left:1425px;top:285.0px" width="14" height="14" viewBox="0 0 14 14"><circle cx="7" cy="7" r="7" fill="#2196f3"></circle><path d="M5 3V11L11.3 7Z" fill="#fff"></path></svg>
<span class="a t" style="font-size: 11px; line-height: 14px; color: rgb(20, 20, 20); left: 1443.5px; top: 287px;">Angebotsdokument erstellen</span>
<svg style="left:1425px;top:306.0px" width="14" height="14" viewBox="0 0 14 14"><circle cx="7" cy="7" r="7" fill="#2196f3"></circle><path d="M5 3V11L11.3 7Z" fill="#fff"></path></svg>
<span class="a t" style="font-size: 11px; line-height: 14px; color: rgb(20, 20, 20); left: 1443.5px; top: 308px;">Angebotsdokument per Mail versenden</span>
<svg style="left:1425px;top:327.0px" width="14" height="14" viewBox="0 0 14 14"><circle cx="7" cy="7" r="7" fill="#2196f3"></circle><path d="M5 3V11L11.3 7Z" fill="#fff"></path></svg>
<span class="a t" style="font-size: 11px; line-height: 14px; color: rgb(20, 20, 20); left: 1443.5px; top: 329px;">Angebot abschließen</span>
<svg style="left:1425px;top:348.0px" width="14" height="14" viewBox="0 0 14 14"><circle cx="7" cy="7" r="7" fill="#2196f3"></circle><path d="M5 3V11L11.3 7Z" fill="#fff"></path></svg>
<span class="a t" style="font-size: 11px; line-height: 14px; color: rgb(20, 20, 20); left: 1443.5px; top: 350px;">Angebot kopieren</span>
<svg style="left:1394px;top:372.0px" width="7" height="4" viewBox="0 0 7 4"><path d="M0 0H7L3.5 4Z" fill="#2d4494"></path></svg>
<svg style="left:1405px;top:368.0px" width="16" height="12" viewBox="0 0 16 12"><path d="M0 1.2C0 0.5 0.5 0 1.2 0H5.2L7 1.6H13.2C13.9 1.6 14.4 2.1 14.4 2.8V11C14.4 11.6 13.9 12 13.2 12H1.2C0.5 12 0 11.6 0 11Z" fill="#e9bf5c"></path><path d="M2.6 4.2H15.2C15.8 4.2 16.1 4.6 16 5.2L15 11.2C14.9 11.7 14.5 12 14 12H1.2Z" fill="#f7d676"></path></svg>
<span class="a t" style="font-size: 11px; line-height: 14px; color: rgb(20, 20, 20); left: 1424.5px; top: 369px;">SLP</span>
<svg style="left:1425px;top:386.0px" width="14" height="14" viewBox="0 0 14 14"><circle cx="7" cy="7" r="7" fill="#2196f3"></circle><path d="M5 3V11L11.3 7Z" fill="#fff"></path></svg>
<span class="a t" style="font-size: 11px; line-height: 14px; color: rgb(20, 20, 20); left: 1443.5px; top: 388px;">Angebot abschließen</span>
<svg style="left:1394px;top:410.0px" width="7" height="4" viewBox="0 0 7 4"><path d="M0 0H7L3.5 4Z" fill="#2d4494"></path></svg>
<svg style="left:1405px;top:406.0px" width="16" height="12" viewBox="0 0 16 12"><path d="M0 1.2C0 0.5 0.5 0 1.2 0H5.2L7 1.6H13.2C13.9 1.6 14.4 2.1 14.4 2.8V11C14.4 11.6 13.9 12 13.2 12H1.2C0.5 12 0 11.6 0 11Z" fill="#e9bf5c"></path><path d="M2.6 4.2H15.2C15.8 4.2 16.1 4.6 16 5.2L15 11.2C14.9 11.7 14.5 12 14 12H1.2Z" fill="#f7d676"></path></svg>
<span class="a t" style="font-size: 11px; line-height: 14px; color: rgb(20, 20, 20); left: 1424.5px; top: 407px;">Allgemein</span>
<svg style="left:1425px;top:423.5px" width="15" height="16" viewBox="0 0 15 16"><rect x="0.8" y="1.8" width="13.4" height="12.6" fill="#f6faff" stroke="#b5d2f6" stroke-width="1.4"></rect><path d="M4 9H12M4 11.5H12" stroke="#dbe9fb" stroke-width="1.2"></path><circle cx="4.4" cy="4.6" r="4" fill="#fff" stroke="#6aa8ee" stroke-width="1"></circle><path d="M4.4 2.4V4.8L6 6.2" fill="none" stroke="#6aa8ee" stroke-width="0.9"></path></svg>
<span class="a t" style="font-size: 11px; line-height: 14px; color: rgb(20, 20, 20); left: 1443.5px; top: 426px;">Events anzeigen</span>
<svg style="left:821px;top:597px" width="8" height="5" viewBox="0 0 8 5"><path d="M0.6 0.6L4 4L7.4 0.6" fill="none" stroke="#2d3c94" stroke-width="1.5"></path></svg>
<svg style="left:844px;top:597px" width="8" height="5" viewBox="0 0 8 5"><path d="M0.6 4.4L4 1L7.4 4.4" fill="none" stroke="#2d3c94" stroke-width="1.5"></path></svg>
<div class="a" style="left:8px;top:612px;width:1644px;height:115px;background:#fdfdfd;"></div>
<div class="a" style="left:8px;top:642px;width:1644px;height:1px;background:#e4e4e4;"></div>
<div class="a" style="left:1652px;top:613px;width:2px;height:114px;background:linear-gradient(90deg,#e6e6e6,#f5f5f5)"></div>
<svg style="left:14px;top:617px" width="13" height="16" viewBox="0 0 13 16"><rect x="0.6" y="2.6" width="11.8" height="12.8" rx="1" fill="#fff" stroke="#455a64" stroke-width="1.1"></rect><rect x="3.6" y="0.8" width="5.8" height="3" rx="0.8" fill="#eceff1" stroke="#607d8b" stroke-width="0.8"></rect><path d="M3.2 9.2L5.6 11.6L10 6.6" fill="none" stroke="#43a047" stroke-width="1.5"></path></svg>
<span class="a t" style="font-size: 11px; line-height: 14px; color: rgb(139, 139, 139); left: 34px; letter-spacing: 0.51px; top: 620px;">AKTIVITÄTEN (0)</span>
<svg style="left:137px;top:623px" width="7" height="7" viewBox="0 0 7 7"><path d="M0.9 0.9L6.1 6.1M6.1 0.9L0.9 6.1" stroke="#2d4494" stroke-width="2.5" stroke-linecap="butt"></path></svg>
<svg style="left:158px;top:617px" width="13" height="16" viewBox="0 0 13 16"><path d="M0.6 0.6H8.4L12.4 4.6V15.4H0.6Z" fill="#f2f5fa" stroke="#78909c" stroke-width="1.1"></path><path d="M8.4 0.6V4.6H12.4" fill="#dfe5ea" stroke="#78909c" stroke-width="0.9"></path></svg>
<span class="a t" style="font-size: 11px; line-height: 14px; color: rgb(139, 139, 139); left: 178.5px; letter-spacing: 0.18px; top: 620px;">DOKUMENTE (0)</span>
<svg style="left:277px;top:623px" width="7" height="7" viewBox="0 0 7 7"><path d="M0.9 0.9L6.1 6.1M6.1 0.9L0.9 6.1" stroke="#2d4494" stroke-width="2.5" stroke-linecap="butt"></path></svg>
<svg style="left:297px;top:617px" width="14" height="15" viewBox="0 0 14 15"><rect x="0" y="6" width="3" height="7.5" fill="#1e88e5"></rect><rect x="2.5" y="1" width="9.5" height="12.5" fill="#6eb6f5"></rect><rect x="3.5" y="1" width="6" height="12.5" fill="#2f8fe8"></rect><path d="M4.4 3.2H11M4.4 5.6H11M4.4 8H11" stroke="#a9d3f9" stroke-width="1"></path><circle cx="10.4" cy="11.2" r="3.2" fill="#43a047"></circle><path d="M9 12.6V10.6C9 9.6 11.8 9.6 11.8 10.6V12.6" fill="none" stroke="#c8e6c9" stroke-width="0.9"></path></svg>
<span class="a t" style="font-size: 11px; line-height: 14px; color: rgb(139, 139, 139); left: 319px; letter-spacing: 0.1px; top: 620px;">ANLAGENKONTO (1)</span>
<svg style="left:439px;top:623px" width="7" height="7" viewBox="0 0 7 7"><path d="M0.9 0.9L6.1 6.1M6.1 0.9L0.9 6.1" stroke="#2d4494" stroke-width="2.5" stroke-linecap="butt"></path></svg>
<svg style="left:460px;top:617px" width="12" height="16" viewBox="0 0 12 16"><rect x="0" y="0" width="12" height="16" rx="1.4" fill="#585858"></rect><rect x="1.2" y="1.3" width="9.6" height="2.8" fill="#86cc48"></rect><rect x="6.8" y="2.2" width="1.1" height="1" fill="#3d6b24"></rect><rect x="8.7" y="2.2" width="1.1" height="1" fill="#3d6b24"></rect><rect x="1.4" y="5.6" width="2.6" height="1.8" fill="#e6e6e6"></rect><rect x="4.6" y="5.6" width="2.6" height="1.8" fill="#e6e6e6"></rect><rect x="7.800000000000001" y="5.6" width="2.6" height="1.8" fill="#ef4b45"></rect><rect x="1.4" y="8.1" width="2.6" height="1.8" fill="#e6e6e6"></rect><rect x="4.6" y="8.1" width="2.6" height="1.8" fill="#e6e6e6"></rect><rect x="7.800000000000001" y="8.1" width="2.6" height="1.8" fill="#e6e6e6"></rect><rect x="1.4" y="10.6" width="2.6" height="1.8" fill="#e6e6e6"></rect><rect x="4.6" y="10.6" width="2.6" height="1.8" fill="#e6e6e6"></rect><rect x="7.800000000000001" y="10.6" width="2.6" height="1.8" fill="#e6e6e6"></rect><rect x="1.4" y="13.1" width="2.6" height="1.8" fill="#e6e6e6"></rect><rect x="4.6" y="13.1" width="2.6" height="1.8" fill="#e6e6e6"></rect><rect x="7.800000000000001" y="13.1" width="2.6" height="1.8" fill="#e6e6e6"></rect></svg>
<span class="a t" style="font-size: 11px; line-height: 14px; color: rgb(28, 28, 28); left: 480.6px; letter-spacing: 0.27px; top: 620px;">PREISKALKULATIONEN (1)</span>
<svg style="left:635px;top:623px" width="7" height="7" viewBox="0 0 7 7"><path d="M0.9 0.9L6.1 6.1M6.1 0.9L0.9 6.1" stroke="#2d4494" stroke-width="2.5" stroke-linecap="butt"></path></svg>
<svg style="left:654px;top:617px" width="17" height="16" viewBox="0 0 17 16"><path d="M0.5 0.5H8L11.5 4V15.5H0.5Z" fill="#f1f4fa" stroke="#78909c"></path><path d="M8 0.5V4H11.5" fill="#dfe5ea" stroke="#78909c" stroke-width="0.8"></path><rect x="2.3" y="2.4" width="4.4" height="1.7" fill="#a8c628"></rect><path d="M2.5 14L4 11.2L5.5 12.8L7 10.8L9 14Z" fill="#64a4e6"></path><rect x="2.3" y="13.6" width="7.4" height="0.9" fill="#90a4ae"></rect><rect x="5" y="5.3" width="11" height="4.2" fill="#e8c52d" stroke="#c9a616" stroke-width="0.8"></rect></svg>
<span class="a t" style="font-size: 11px; line-height: 14px; color: rgb(139, 139, 139); left: 676.4px; letter-spacing: 0.24px; top: 620px;">ANGEBOTSPOSITIONEN (0)</span>
<svg style="left:837px;top:623px" width="7" height="7" viewBox="0 0 7 7"><path d="M0.9 0.9L6.1 6.1M6.1 0.9L0.9 6.1" stroke="#2d4494" stroke-width="2.5" stroke-linecap="butt"></path></svg>
<svg style="left:857px;top:617px" width="14" height="16" viewBox="0 0 14 16"><rect x="4" y="0" width="9.6" height="12.6" fill="#cfd8dc"></rect><rect x="4.6" y="0.6" width="8.4" height="12" fill="#b7d5f2"></rect><rect x="5.2" y="1.4" width="1.6" height="1.6" fill="#4f9fe8"></rect><rect x="7.800000000000001" y="1.4" width="1.6" height="1.6" fill="#4f9fe8"></rect><rect x="10.4" y="1.4" width="1.6" height="1.6" fill="#4f9fe8"></rect><rect x="5.2" y="4.0" width="1.6" height="1.6" fill="#4f9fe8"></rect><rect x="7.800000000000001" y="4.0" width="1.6" height="1.6" fill="#4f9fe8"></rect><rect x="10.4" y="4.0" width="1.6" height="1.6" fill="#4f9fe8"></rect><rect x="5.2" y="6.6" width="1.6" height="1.6" fill="#4f9fe8"></rect><rect x="7.800000000000001" y="6.6" width="1.6" height="1.6" fill="#4f9fe8"></rect><rect x="10.4" y="6.6" width="1.6" height="1.6" fill="#4f9fe8"></rect><rect x="5.2" y="9.200000000000001" width="1.6" height="1.6" fill="#4f9fe8"></rect><rect x="7.800000000000001" y="9.200000000000001" width="1.6" height="1.6" fill="#4f9fe8"></rect><rect x="10.4" y="9.200000000000001" width="1.6" height="1.6" fill="#4f9fe8"></rect><circle cx="4.6" cy="8.6" r="2.5" fill="#f2a65a"></circle><path d="M2.1 8C2.3 5.5 6.9 5.5 7.1 8C6 7.2 3.2 7.2 2.1 8Z" fill="#3e2723"></path><path d="M0 16C0 12.4 2 11.4 4.6 11.4C7.2 11.4 9.2 12.4 9.2 16Z" fill="#3645b5"></path><path d="M3.6 11.5L4.6 14L5.6 11.5Z" fill="#e53935"></path></svg>
<span class="a t" style="font-size: 11px; line-height: 14px; color: rgb(139, 139, 139); left: 878.4px; letter-spacing: 0.18px; top: 620px;">GESCHÄFTSPARTNER (1)</span>
<svg style="left:1023.6px;top:623px" width="7" height="7" viewBox="0 0 7 7"><path d="M0.9 0.9L6.1 6.1M6.1 0.9L0.9 6.1" stroke="#2d4494" stroke-width="2.5" stroke-linecap="butt"></path></svg>
<svg style="left:1044.5px;top:617px" width="14" height="16" viewBox="0 0 14 16"><circle cx="7" cy="5.4" r="3.5" fill="#f2a65a"></circle><path d="M3.4 4.8C3.4 0.6 10.6 0.6 10.6 4.8C9 3.5 5 3.5 3.4 4.8Z" fill="#3e2723"></path><path d="M0 16C0 11.4 3 10.2 7 10.2C11 10.2 14 11.4 14 16Z" fill="#546e7a"></path><path d="M5.4 10.3L7 14.5L8.6 10.3Z" fill="#eceff1"></path><path d="M6.5 10.8H7.5L7.8 14L7 15L6.2 14Z" fill="#ef6a7a"></path></svg>
<span class="a t" style="font-size: 11px; line-height: 14px; color: rgb(139, 139, 139); left: 1065.6px; letter-spacing: 0.15px; top: 620px;">ANSPRECHPARTNER (1)</span>
<svg style="left:1204px;top:623px" width="7" height="7" viewBox="0 0 7 7"><path d="M0.9 0.9L6.1 6.1M6.1 0.9L0.9 6.1" stroke="#2d4494" stroke-width="2.5" stroke-linecap="butt"></path></svg>
<svg style="left:1225px;top:618px" width="14" height="14" viewBox="0 0 14 14"><path d="M0 0H14V10.5L10.5 14H0Z" fill="#fbc02d"></path><path d="M10.5 14V10.5H14Z" fill="#fff3c4"></path><path d="M2.5 3H11.5M2.5 5H11.5M2.5 7H8" stroke="#e59a0a" stroke-width="1"></path></svg>
<span class="a t" style="font-size: 11px; line-height: 14px; color: rgb(139, 139, 139); left: 1246px; letter-spacing: 0.24px; top: 620px;">NOTIZEN (0)</span>
<svg style="left:1324px;top:623px" width="7" height="7" viewBox="0 0 7 7"><path d="M0.9 0.9L6.1 6.1M6.1 0.9L0.9 6.1" stroke="#2d4494" stroke-width="2.5" stroke-linecap="butt"></path></svg>
<svg style="left:1345px;top:617.5px" width="15" height="15" viewBox="0 0 15 15"><rect x="0.3" y="0.6" width="11.4" height="1.5" fill="#3f51b5"></rect><rect x="0.8" y="3.2" width="10.4" height="8.6" fill="#a9cdf5"></rect><path d="M2.2 5.2H8.6M2.2 7.2H8.6M2.2 9.2H6" stroke="#3f79d6" stroke-width="1"></path><circle cx="10.6" cy="10.8" r="3.3" fill="#fff" stroke="#1aa7b8" stroke-width="1.2"></circle><path d="M10.6 9V11L11.8 11.8" fill="none" stroke="#37474f" stroke-width="0.9"></path></svg>
<span class="a t" style="font-size: 11px; line-height: 14px; color: rgb(139, 139, 139); left: 1366px; letter-spacing: 0.26px; top: 620px;">VARIANTE (1)</span>
<svg style="left:1449.6px;top:623px" width="7" height="7" viewBox="0 0 7 7"><path d="M0.9 0.9L6.1 6.1M6.1 0.9L0.9 6.1" stroke="#2d4494" stroke-width="2.5" stroke-linecap="butt"></path></svg>
<div class="a" style="left:454px;top:639px;width:194px;height:3px;background:#2d4494;"></div>
<svg style="left:1477.5px;top:623px" width="8" height="8" viewBox="0 0 8 8"><path d="M3.75 0.2V7.6M0 3.9H7.5" stroke="#4a4a4a" stroke-width="1"></path></svg>
<svg style="left:18px;top:650px" width="17" height="17" viewBox="0 0 17 17"><rect x="0.5" y="0.5" width="12.5" height="11.8" fill="#fff" stroke="#90c6f7"></rect><path d="M0.5 3.4H13M0.5 9.2H13M4.6 0.5V12.3M8.8 0.5V12.3" stroke="#90c6f7" stroke-width="1"></path><rect x="0" y="4.4" width="13.5" height="2.6" fill="#3c9142"></rect><circle cx="11.8" cy="11.8" r="4.5" fill="#2f8a36"></circle><path d="M11.8 9.3V14.3M9.3 11.8H14.3" stroke="#fff" stroke-width="1.3"></path></svg>
<svg style="left:42px;top:656px" width="7.4" height="4" viewBox="0 0 7.4 4"><path d="M0 0H7.4L3.7 4Z" fill="#2d4494"></path></svg>
<svg style="left:65px;top:650px" width="17" height="17" viewBox="0 0 17 17"><path d="M0.5 4.2H10V1.2L15 5L10 8.8V5.8H0.5Z" fill="#b4dcb6"></path><path d="M14.5 10.2H5V7.2L0 11L5 14.8V11.8H11Z" fill="#b4dcb6"></path><path d="M8.3 16.2L9 13.8L14.6 8.2L16.2 9.8L10.6 15.4Z" fill="#f8d49a"></path><path d="M14.6 8.2L15.4 7.4L17 9L16.2 9.8Z" fill="#f3b3ae"></path></svg>
<svg style="left:92px;top:650px" width="17" height="17" viewBox="0 0 17 17"><rect x="0.6" y="0.6" width="10.8" height="9.3" fill="#fff" stroke="#3f51b5" stroke-width="1.2"></rect><path d="M1 3.2H4M1 5.4H4M1 7.6H4" stroke="#3f51b5" stroke-width="1"></path><path d="M4.3 0.6V9.9" stroke="#3f51b5" stroke-width="1"></path><path d="M12.5 12.5L16 16" stroke="#546e7a" stroke-width="1.6"></path><circle cx="10.6" cy="10.2" r="3.2" fill="#64b5f6" stroke="#3d8fdc" stroke-width="0.8"></circle></svg>
<svg style="left:121px;top:654px" width="1" height="11" viewBox="0 0 1 11"><path d="M0.5 0V11" stroke="#2d4494" stroke-width="1" stroke-dasharray="1 1"></path></svg>
<svg style="left:137px;top:653px" width="12" height="11" viewBox="0 0 12 11"><path d="M0 1.1H12M0 5.4H12M0 9.6H12" stroke="#2f3fab" stroke-width="1.9"></path></svg>
<svg style="left:165px;top:654px" width="1" height="11" viewBox="0 0 1 11"><path d="M0.5 0V11" stroke="#2d4494" stroke-width="1" stroke-dasharray="1 1"></path></svg>
<svg style="left:179px;top:650px" width="17" height="16" viewBox="0 0 17 16"><rect x="5.3" y="0.8" width="10.9" height="9.6" fill="#fff" stroke="#90c6f7"></rect><path d="M5.3 4H16.2M5.3 7.2H16.2M9 0.8V10.4M12.6 0.8V10.4" stroke="#90c6f7" stroke-width="1"></path><rect x="0.6" y="5.2" width="10" height="9.4" fill="#fff" stroke="#3c9142" stroke-width="1.1"></rect><path d="M0.6 8.3H10.6M0.6 11.4H10.6M5.6 5.2V14.6" stroke="#6ab06f" stroke-width="1"></path></svg>
<svg style="left:203px;top:656px" width="7.4" height="4" viewBox="0 0 7.4 4"><path d="M0 0H7.4L3.7 4Z" fill="#2d4494"></path></svg>
<svg style="left:226px;top:651px" width="15" height="14" viewBox="0 0 15 14"><rect x="0.5" y="1" width="4.2" height="4.2" fill="#fff" stroke="#3447a9"></rect><rect x="1.8" y="2.3" width="1.6" height="1.6" fill="#5c6bc0"></rect><rect x="0.5" y="8.6" width="4.2" height="4.2" fill="#fff" stroke="#3447a9"></rect><path d="M7.5 3.1H14.5M7.5 9H14.5" stroke="#26418f" stroke-width="1.1"></path></svg>
<svg style="left:249px;top:656px" width="7.4" height="4" viewBox="0 0 7.4 4"><path d="M0 0H7.4L3.7 4Z" fill="#2d4494"></path></svg>
<svg style="left:273px;top:654px" width="1" height="11" viewBox="0 0 1 11"><path d="M0.5 0V11" stroke="#2d4494" stroke-width="1" stroke-dasharray="1 1"></path></svg>
<div class="a" style="left:282px;top:651px;width:222px;height:17px;background:#fff;border:1px solid #e0e0e0;box-sizing:border-box;"></div>
<div class="a" style="left:481px;top:652px;width:22px;height:15px;background:#f4f4f4;"></div>
<div class="a" style="left:480px;top:652px;width:1px;height:15px;background:#e4e4e4;"></div>
<svg style="left:489px;top:658px" width="7" height="4" viewBox="0 0 7 4"><path d="M0 0H7L3.5 4Z" fill="#b3b9e2"></path></svg>
<span class="a t" style="font-size: 11px; line-height: 14px; color: rgb(176, 176, 176); left: 285.5px; top: 654px;">Standard</span>
<div class="a" style="left:507px;top:651px;width:160px;height:17px;background:#fff;border:1px solid #e0e0e0;box-sizing:border-box;"></div>
<svg style="left:674px;top:653px" width="15" height="15" viewBox="0 0 15 15"><path d="M5.6 9.4L0.8 14.2" stroke="#455a64" stroke-width="1.7"></path><circle cx="9" cy="5.6" r="5" fill="#64b5f6" stroke="#4a9be4" stroke-width="0.8"></circle></svg>
<svg style="left:1579.5px;top:650px" width="16" height="17" viewBox="0 0 16 17"><rect x="5" y="0.5" width="4.4" height="10" fill="#fff" stroke="#90c6f7" stroke-width="0.9"></rect><path d="M5 3H9.4M5 5.5H9.4M5 8H9.4" stroke="#90c6f7" stroke-width="0.9"></path><rect x="0.7" y="0.6" width="4.4" height="12.2" fill="#fff" stroke="#2f8a36" stroke-width="1"></rect><path d="M1 3.6H5M1 6.6H5M1 9.6H5" stroke="#9fcbf5" stroke-width="0.9"></path><path d="M4 15.4L10.5 8.6" stroke="#607d8b" stroke-width="1.6"></path><path d="M12.2 5.2C10.2 5 9.6 7.6 11.2 8.6C12.6 9.4 14 8.4 13.9 7" fill="none" stroke="#607d8b" stroke-width="1.5"></path><path d="M8.6 10.4L13.6 15.2" stroke="#fdb515" stroke-width="2.6" stroke-linecap="round"></path><path d="M4.2 4.6L8.4 9.8" stroke="#b0bec5" stroke-width="0.9"></path></svg>
<svg style="left:1603px;top:656px" width="7.4" height="4" viewBox="0 0 7.4 4"><path d="M0 0H7.4L3.7 4Z" fill="#2d4494"></path></svg>
<svg style="left:1625.5px;top:654px" width="16" height="8" viewBox="0 0 16 8"><path d="M0 4H7" stroke="#a9b9c2" stroke-width="1.4"></path><path d="M6.5 0.5C7.6 0.5 8.3 1 8.3 2H14.3C14.3 1.4 14.7 1 15.4 1V7C14.7 7 14.3 6.6 14.3 6H8.3C8.3 7 7.6 7.5 6.5 7.5Z" fill="#1e88e5"></path><rect x="9" y="3" width="4.6" height="2" fill="#1668c4"></rect></svg>
<div class="a" style="left:8px;top:675px;width:1644px;height:24px;background:#f0f0f0;"></div>
<div class="a" style="left:8px;top:675px;width:1644px;height:1px;background:#c6c6c6;"></div>
<div class="a" style="left:8px;top:697px;width:1644px;height:1px;background:#c6c6c6;"></div>
<div class="a" style="left:8px;top:675px;width:1px;height:24px;background:#c6c6c6;"></div>
<div class="a" style="left:69px;top:675px;width:1px;height:24px;background:#c6c6c6;"></div>
<div class="a" style="left:267px;top:675px;width:1px;height:24px;background:#c6c6c6;"></div>
<div class="a" style="left:465px;top:675px;width:1px;height:24px;background:#c6c6c6;"></div>
<div class="a" style="left:663px;top:675px;width:1px;height:24px;background:#c6c6c6;"></div>
<div class="a" style="left:861px;top:675px;width:1px;height:24px;background:#c6c6c6;"></div>
<div class="a" style="left:1059px;top:675px;width:1px;height:24px;background:#c6c6c6;"></div>
<div class="a" style="left:1257px;top:675px;width:1px;height:24px;background:#c6c6c6;"></div>
<div class="a" style="left:1455px;top:675px;width:1px;height:24px;background:#c6c6c6;"></div>
<div class="a" style="left:1651px;top:675px;width:1px;height:24px;background:#c6c6c6;"></div>
<span class="a t" style="left: 8px; width: 61px; text-align: center; font-size: 11px; line-height: 14px; color: rgb(20, 20, 20); top: 681px;">Fav.</span>
<span class="a t" style="left: 69px; width: 198px; text-align: center; font-size: 11px; line-height: 14px; color: rgb(20, 20, 20); top: 680px;">Kalk.-Id</span>
<span class="a t" style="left: 267px; width: 198px; text-align: center; font-size: 11px; line-height: 14px; color: rgb(20, 20, 20); top: 680px;">Angebot</span>
<span class="a t" style="left: 465px; width: 198px; text-align: center; font-size: 11px; line-height: 14px; color: rgb(20, 20, 20); top: 680px;">Anlagenkonto</span>
<span class="a t" style="left: 663px; width: 198px; text-align: center; font-size: 11px; line-height: 14px; color: rgb(20, 20, 20); top: 680px;">Kalk.-Status</span>
<span class="a t" style="left: 861px; width: 198px; text-align: center; font-size: 11px; line-height: 14px; color: rgb(20, 20, 20); top: 680px;">Sparte</span>
<span class="a t" style="left: 1059px; width: 198px; text-align: center; font-size: 11px; line-height: 14px; color: rgb(20, 20, 20); top: 680px;">Lieferbeginn</span>
<span class="a t" style="left: 1257px; width: 198px; text-align: center; font-size: 11px; line-height: 14px; color: rgb(20, 20, 20); top: 680px;">Lieferende</span>
<span class="a t" style="left: 1455px; width: 197px; text-align: center; font-size: 11px; line-height: 14px; color: rgb(20, 20, 20); top: 680px;">Laufzeitmenge Gesamt</span>
<div class="a" style="left:8px;top:699px;width:1644px;height:26px;background:#c2d4f0;"></div>
<div class="a" style="left:8px;top:725px;width:1644px;height:2px;background:#f7f7f7;"></div>
<svg style="left:19px;top:703px" width="12" height="16" viewBox="0 0 12 16"><rect x="0" y="0" width="12" height="16" rx="1.4" fill="#585858"></rect><rect x="1.2" y="1.3" width="9.6" height="2.8" fill="#86cc48"></rect><rect x="6.8" y="2.2" width="1.1" height="1" fill="#3d6b24"></rect><rect x="8.7" y="2.2" width="1.1" height="1" fill="#3d6b24"></rect><rect x="1.4" y="5.6" width="2.6" height="1.8" fill="#e6e6e6"></rect><rect x="4.6" y="5.6" width="2.6" height="1.8" fill="#e6e6e6"></rect><rect x="7.800000000000001" y="5.6" width="2.6" height="1.8" fill="#ef4b45"></rect><rect x="1.4" y="8.1" width="2.6" height="1.8" fill="#e6e6e6"></rect><rect x="4.6" y="8.1" width="2.6" height="1.8" fill="#e6e6e6"></rect><rect x="7.800000000000001" y="8.1" width="2.6" height="1.8" fill="#e6e6e6"></rect><rect x="1.4" y="10.6" width="2.6" height="1.8" fill="#e6e6e6"></rect><rect x="4.6" y="10.6" width="2.6" height="1.8" fill="#e6e6e6"></rect><rect x="7.800000000000001" y="10.6" width="2.6" height="1.8" fill="#e6e6e6"></rect><rect x="1.4" y="13.1" width="2.6" height="1.8" fill="#e6e6e6"></rect><rect x="4.6" y="13.1" width="2.6" height="1.8" fill="#e6e6e6"></rect><rect x="7.800000000000001" y="13.1" width="2.6" height="1.8" fill="#e6e6e6"></rect></svg>
<svg style="left:39px;top:710px" width="7.4" height="4" viewBox="0 0 7.4 4"><path d="M0 0H7.4L3.7 4Z" fill="#2d4494"></path></svg>
<span class="a t" style="font-size: 11px; line-height: 14px; color: rgb(20, 20, 20); left: 76.4px; letter-spacing: 0.14px; top: 706px;">EVIKALK 00004592</span>
<span class="a t" style="font-size: 11px; line-height: 14px; color: rgb(20, 20, 20); left: 274.4px; top: 706px;">ANG 0001581</span>
<span class="a t" style="font-size: 11px; line-height: 14px; color: rgb(20, 20, 20); left: 472.4px; letter-spacing: 0.1px; top: 706px;">EVIAK0000005466</span>
<span class="a t" style="font-size: 11px; line-height: 14px; color: rgb(20, 20, 20); left: 670.4px; top: 706px;">?</span>
<span class="a t" style="font-size: 11px; line-height: 14px; color: rgb(20, 20, 20); left: 868.4px; letter-spacing: 0.07px; top: 706px;">01 BITTE AENDERN</span>
<span class="a t" style="font-size: 11px; line-height: 14px; color: rgb(20, 20, 20); left: 1066.4px; top: 706px;">01.08.2020 00:00</span>
<span class="a t" style="font-size: 11px; line-height: 14px; color: rgb(20, 20, 20); left: 1264.4px; top: 706px;">31.12.2020 00:00</span>

</body></html>
